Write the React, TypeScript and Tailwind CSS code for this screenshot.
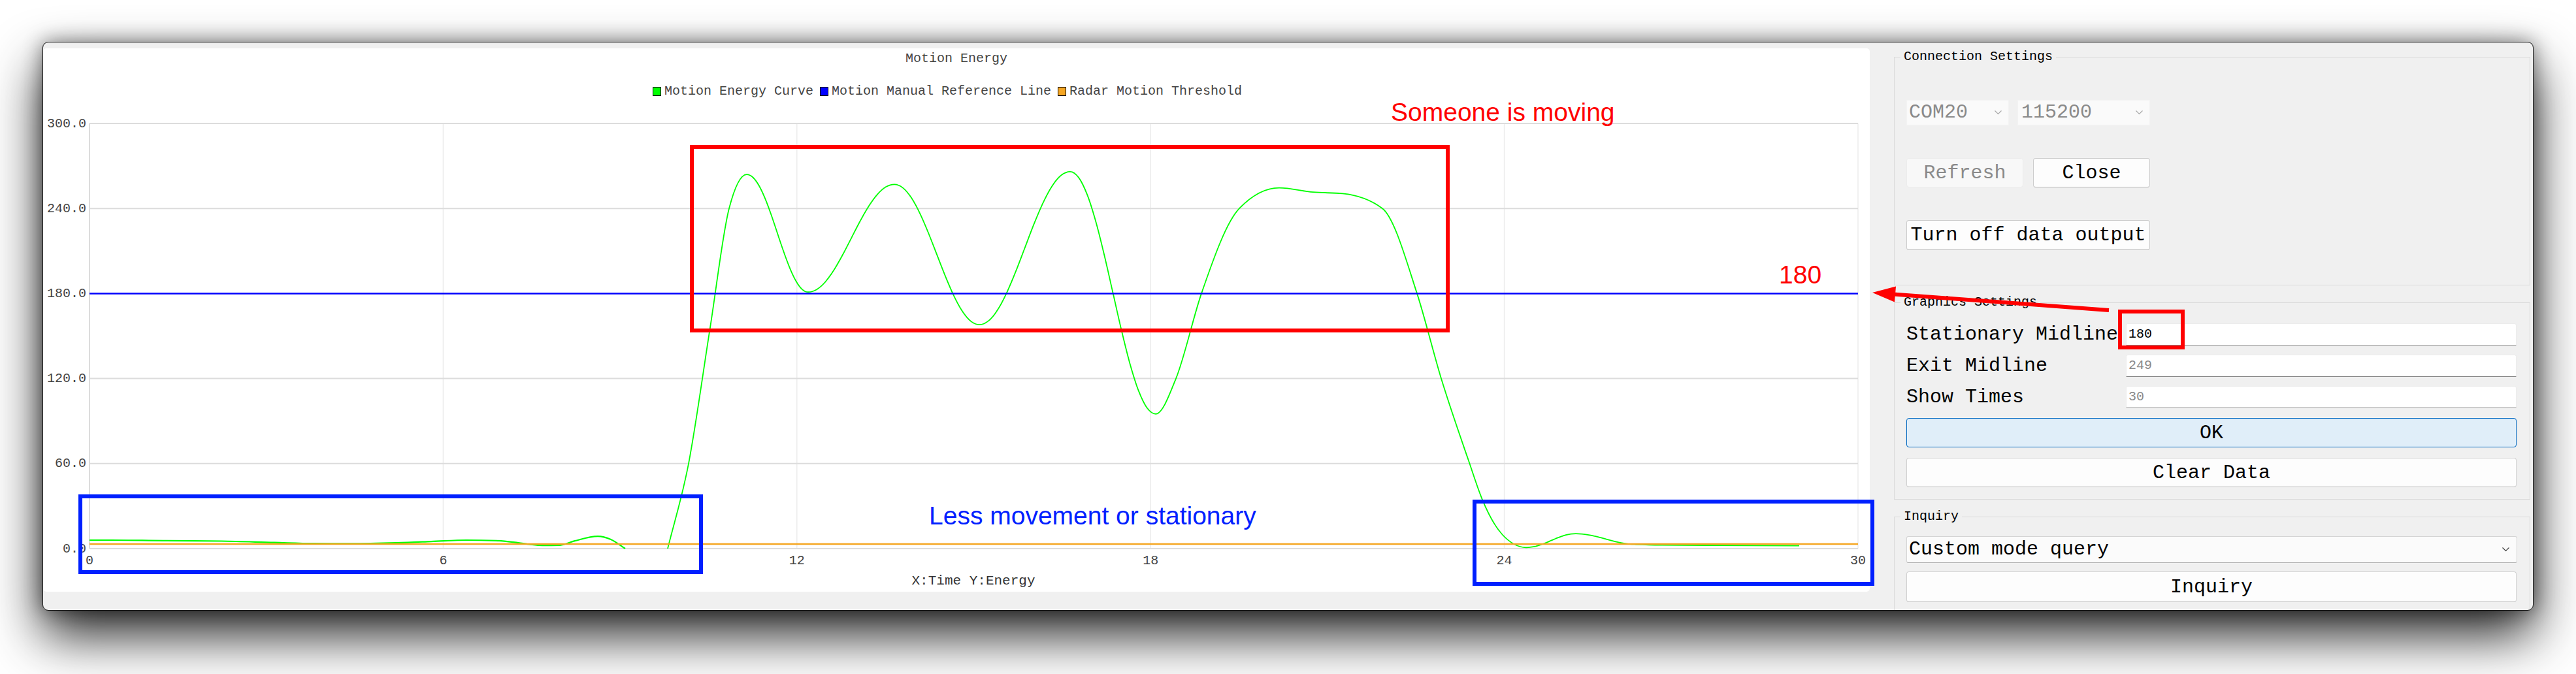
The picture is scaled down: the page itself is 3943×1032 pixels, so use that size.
import React from 'react';

type Pt = [number, number];

// page x of the chart panel; plot box inside the svg
const X0 = 66;
const PLOT_L = 71;
const PLOT_R = 2778;
const PLOT_T = 15;
const PLOT_B = 666;

const sx = (px: number) => px - X0;
const sy = (v: number) => PLOT_B - v * ((PLOT_B - PLOT_T) / 300);
const tx = (t: number) => PLOT_L + (t * (PLOT_R - PLOT_L)) / 30;

// monotone cubic through the points, like d3 curveMonotoneX
function monotonePath(pts: Pt[]): string {
  const p = pts.map(([x, v]) => [sx(x), sy(v)]);
  const n = p.length;
  const h: number[] = [];
  const m: number[] = [];
  for (let i = 0; i < n - 1; i++) {
    h.push(p[i + 1][0] - p[i][0]);
    m.push((p[i + 1][1] - p[i][1]) / h[i]);
  }
  const t: number[] = new Array(n).fill(0);
  t[0] = m[0];
  t[n - 1] = m[n - 2];
  for (let i = 1; i < n - 1; i++) {
    const s0 = m[i - 1];
    const s1 = m[i];
    if (s0 * s1 <= 0) continue;
    const q = (s0 * h[i] + s1 * h[i - 1]) / (h[i - 1] + h[i]);
    t[i] = (Math.sign(s0) + Math.sign(s1)) * Math.min(Math.abs(s0), Math.abs(s1), 0.5 * Math.abs(q));
  }
  let d = `M${p[0][0].toFixed(1)},${p[0][1].toFixed(1)}`;
  for (let i = 0; i < n - 1; i++) {
    const dx = h[i] / 3;
    d += ` C${(p[i][0] + dx).toFixed(1)},${(p[i][1] + t[i] * dx).toFixed(1)} ${(p[i + 1][0] - dx).toFixed(1)},${(
      p[i + 1][1] -
      t[i + 1] * dx
    ).toFixed(1)} ${p[i + 1][0].toFixed(1)},${p[i + 1][1].toFixed(1)}`;
  }
  return d;
}

// half-cosine swing between two turning points
function swing(a: Pt, b: Pt, k = 10): Pt[] {
  const out: Pt[] = [];
  for (let i = 1; i <= k; i++) {
    const s = i / k;
    out.push([a[0] + (b[0] - a[0]) * s, a[1] + ((b[1] - a[1]) * (1 - Math.cos(Math.PI * s))) / 2]);
  }
  return out;
}

const quiet: Pt[] = [
  [137, 6], [170, 6], [250, 5.6], [339, 5.3], [420, 4.3], [480, 3.6], [536, 3.5], [607, 4.1],
  [660, 5], [714, 6], [760, 5.6], [786, 4.5], [810, 3], [830, 2.2], [857, 2.4], [880, 5.5],
  [915, 8.7], [935, 6.5], [957, 0],
];

const moving: Pt[] = [
  [1022, 0], [1054, 60], [1087, 156], [1116, 240], [1143, 264],
  ...swing([1143, 264], [1237, 181]),
  ...swing([1237, 181], [1369, 257]),
  ...swing([1369, 257], [1499, 158]),
  ...swing([1499, 158], [1638, 266]),
  ...swing([1638, 266], [1769, 95]),
  [1800, 120], [1839, 180], [1897, 240], [1958, 254.5], [2010, 251.5], [2055, 250.5], [2116, 240],
  [2169, 180], [2206, 120], [2248, 62], [2269, 34.5], [2300, 9.7], [2336, 0.8],
  ...swing([2336, 0.8], [2412, 10.5]),
  ...swing([2412, 10.5], [2504, 3]),
  [2545, 2.5], [2616, 2.3], [2754, 2],
];

const yTicks = [0, 60, 120, 180, 240, 300];
const xTicks = [0, 6, 12, 18, 24, 30];

function Chevron({ color }: { color: string }) {
  return (
    <svg width="11" height="7" viewBox="0 0 11 7" className="shrink-0">
      <polyline points="0.5,0.5 5.5,5.5 10.5,0.5" fill="none" stroke={color} strokeWidth="1.2" />
    </svg>
  );
}

function Chart() {
  return (
    <div className="mt-[9px] flex h-[832px] w-[2796px] shrink-0 flex-col rounded-[5px] bg-white font-['Liberation_Mono',monospace] text-[#444]">
      <div className="h-[32px] text-center text-[20px] leading-[32px]">Motion Energy</div>
      <div className="mt-[18px] flex h-[32px] items-center justify-center pr-[28px] text-[20px]">
        <span className="h-[14px] w-[13px] border border-black bg-[#00ff00]" />
        <span className="ml-[5px]">Motion Energy Curve</span>
        <span className="ml-[10px] h-[14px] w-[13px] border border-black bg-[#0000ff]" />
        <span className="ml-[5px]">Motion Manual Reference Line</span>
        <span className="ml-[10px] h-[14px] w-[13px] border border-black bg-[#f5a623]" />
        <span className="ml-[5px]">Radar Motion Threshold</span>
      </div>
      <svg className="mt-[18px] h-[700px] w-[2796px]" viewBox="0 0 2796 700">
        {xTicks.map((t) => (
          <line
            key={`v${t}`}
            x1={tx(t)}
            x2={tx(t)}
            y1={PLOT_T}
            y2={PLOT_B}
            stroke={t === 0 ? '#dcdcdc' : '#ececec'}
            strokeWidth={t === 0 ? 2 : 1.5}
          />
        ))}
        {yTicks.map((v) => (
          <line key={`h${v}`} x1={PLOT_L} x2={PLOT_R} y1={sy(v)} y2={sy(v)} stroke="#dcdcdc" strokeWidth="2" />
        ))}
        {yTicks.map((v) => (
          <text key={`yl${v}`} x={66} y={sy(v)} textAnchor="end" dominantBaseline="central" fontSize="20" fill="#444">
            {v.toFixed(1)}
          </text>
        ))}
        {xTicks.map((t) => (
          <text key={`xl${t}`} x={tx(t)} y={684} textAnchor="middle" dominantBaseline="central" fontSize="20" fill="#444">
            {t}
          </text>
        ))}
        <path d={monotonePath(quiet)} fill="none" stroke="#00ff00" strokeWidth="2.2" />
        <path d={monotonePath(moving)} fill="none" stroke="#00ff00" strokeWidth="1.8" />
        <line x1={PLOT_L} x2={PLOT_R} y1={sy(180)} y2={sy(180)} stroke="#0000ff" strokeWidth="2.5" />
        <line x1={PLOT_L} x2={PLOT_R} y1={sy(3.2)} y2={sy(3.2)} stroke="#f5a623" strokeWidth="2.5" />
      </svg>
      <div className="h-[32px] pl-[52px] text-center text-[21px] leading-[32px] text-[#333]">X:Time Y:Energy</div>
    </div>
  );
}

function Btn({ label, className }: { label: string; className: string }) {
  return (
    <div className={`flex items-center justify-center rounded-[4px] border text-[30px] leading-none ${className}`}>
      {label}
    </div>
  );
}

function Field({ label, value, dim }: { label: string; value: string; dim?: boolean }) {
  return (
    <div className="flex h-[34px] items-center">
      <div className="w-[336px] shrink-0 text-[30px] leading-none text-black">{label}</div>
      <div
        className={`flex h-[34px] flex-1 items-center rounded-t-[3px] border border-b-[#8a8a8a] border-x-[#ececec] border-t-[#ececec] bg-white pl-[3px] text-[20px] ${
          dim ? 'text-[#8a8a8a]' : 'text-black'
        }`}
      >
        {value}
      </div>
    </div>
  );
}

function Panel() {
  return (
    <div className="flex h-full w-[1015px] shrink-0 flex-col pl-[37px] pr-[4px] pt-[13px] font-['Liberation_Mono',monospace]">
      <fieldset className="border border-[#d9d9d9]">
        <legend className="ml-[9px] px-[5px] text-[20px] leading-[18px] text-black">Connection Settings</legend>
        <div className="pl-[18px] pb-[53px] pt-[57px]">
          <div className="flex h-[39px] gap-[13px]">
            <div className="flex w-[157px] items-center justify-between border border-[#f3f3f3] bg-[#fafafa] pl-[3px] pr-[10px] text-[30px] text-[#8a8a8a]">
              COM20
              <Chevron color="#a8a8a8" />
            </div>
            <div className="flex w-[203px] items-center justify-between border border-[#f3f3f3] bg-[#fafafa] pl-[5px] pr-[10px] text-[30px] text-[#8a8a8a]">
              115200
              <Chevron color="#a8a8a8" />
            </div>
          </div>
          <div className="mt-[50px] flex h-[45px] gap-[15px]">
            <Btn label="Refresh" className="w-[179px] border-[#ececec] bg-[#f8f8f8] text-[#8a8a8a]" />
            <Btn label="Close" className="w-[179px] border-[#cccccc] border-b-[#b5b5b5] bg-[#fdfdfd] text-black" />
          </div>
          <Btn
            label="Turn off data output"
            className="mt-[50px] h-[46px] w-[373px] border-[#cccccc] border-b-[#b5b5b5] bg-[#fdfdfd] text-black"
          />
        </div>
      </fieldset>

      <fieldset className="mt-[17px] border border-[#d9d9d9]">
        <legend className="ml-[9px] px-[5px] text-[20px] leading-[18px] text-black">Graphics Settings</legend>
        <div className="flex flex-col pb-[18px] pl-[18px] pr-[20px] pt-[23px]">
          <div className="flex flex-col gap-[14px]">
            <Field label="Stationary Midline" value="180" />
            <Field label="Exit Midline" value="249" dim />
            <Field label="Show Times" value="30" dim />
          </div>
          <Btn label="OK" className="mt-[15px] h-[45px] border-[#0067c0] bg-[#e0eef9] text-black" />
          <Btn label="Clear Data" className="mt-[16px] h-[45px] border-[#d0d0d0] border-b-[#b8b8b8] bg-[#fdfdfd] text-black" />
        </div>
      </fieldset>

      <fieldset className="mt-[17px] flex-1 border border-b-0 border-[#d9d9d9]">
        <legend className="ml-[9px] px-[5px] text-[20px] leading-[18px] text-black">Inquiry</legend>
        <div className="flex flex-col pl-[18px] pr-[19px] pt-[21px]">
          <div className="flex h-[41px] items-center justify-between rounded-[3px] border border-[#d4d4d4] border-b-[#b0b0b0] bg-[#fbfbfb] pl-[3px] pr-[11px] text-[30px] text-black">
            Custom mode query
            <Chevron color="#404040" />
          </div>
          <Btn label="Inquiry" className="mt-[13px] mr-[1px] h-[47px] border-[#d0d0d0] border-b-[#b8b8b8] bg-[#fdfdfd] text-black" />
        </div>
      </fieldset>
    </div>
  );
}

function Annotations() {
  return (
    <div className="pointer-events-none absolute inset-0 font-['Liberation_Sans',Arial,sans-serif]">
      <svg className="absolute inset-0" width="3943" height="1032" viewBox="0 0 3943 1032">
        <rect x="1059" y="225" width="1157" height="281" fill="none" stroke="#ff0000" strokeWidth="6" />
        <rect x="3245" y="477" width="96" height="55" fill="none" stroke="#ff0000" strokeWidth="6" />
        <rect x="123" y="760" width="950" height="116" fill="none" stroke="#0020ff" strokeWidth="6" />
        <rect x="2257" y="768" width="609" height="126" fill="none" stroke="#0020ff" strokeWidth="6" />
        <line x1="3228" y1="475" x2="2898" y2="450.4" stroke="#ff0000" strokeWidth="6" />
        <polygon points="2866,448 2902,438.6 2900,462.6" fill="#ff0000" />
      </svg>
      <div className="absolute left-[2129px] top-[152px] text-[39px] leading-[39px] text-[#ff0000]">Someone is moving</div>
      <div className="absolute left-[2723px] top-[401px] text-[39px] leading-[39px] text-[#ff0000]">180</div>
      <div className="absolute left-[1422px] top-[770px] text-[39px] leading-[39px] text-[#0020ff]">
        Less movement or stationary
      </div>
    </div>
  );
}

export default function App() {
  return (
    <div className="relative h-[1032px] w-[3943px] overflow-hidden bg-white pl-[65px] pt-[64px]">
      <div className="flex h-[871px] w-[3813px] overflow-hidden rounded-[9px] border border-[#111] bg-[#f0f0f0] shadow-[0_38px_80px_rgba(0,0,0,0.85),0_0_30px_rgba(0,0,0,0.45)]">
        <Chart />
        <Panel />
      </div>
      <Annotations />
    </div>
  );
}
